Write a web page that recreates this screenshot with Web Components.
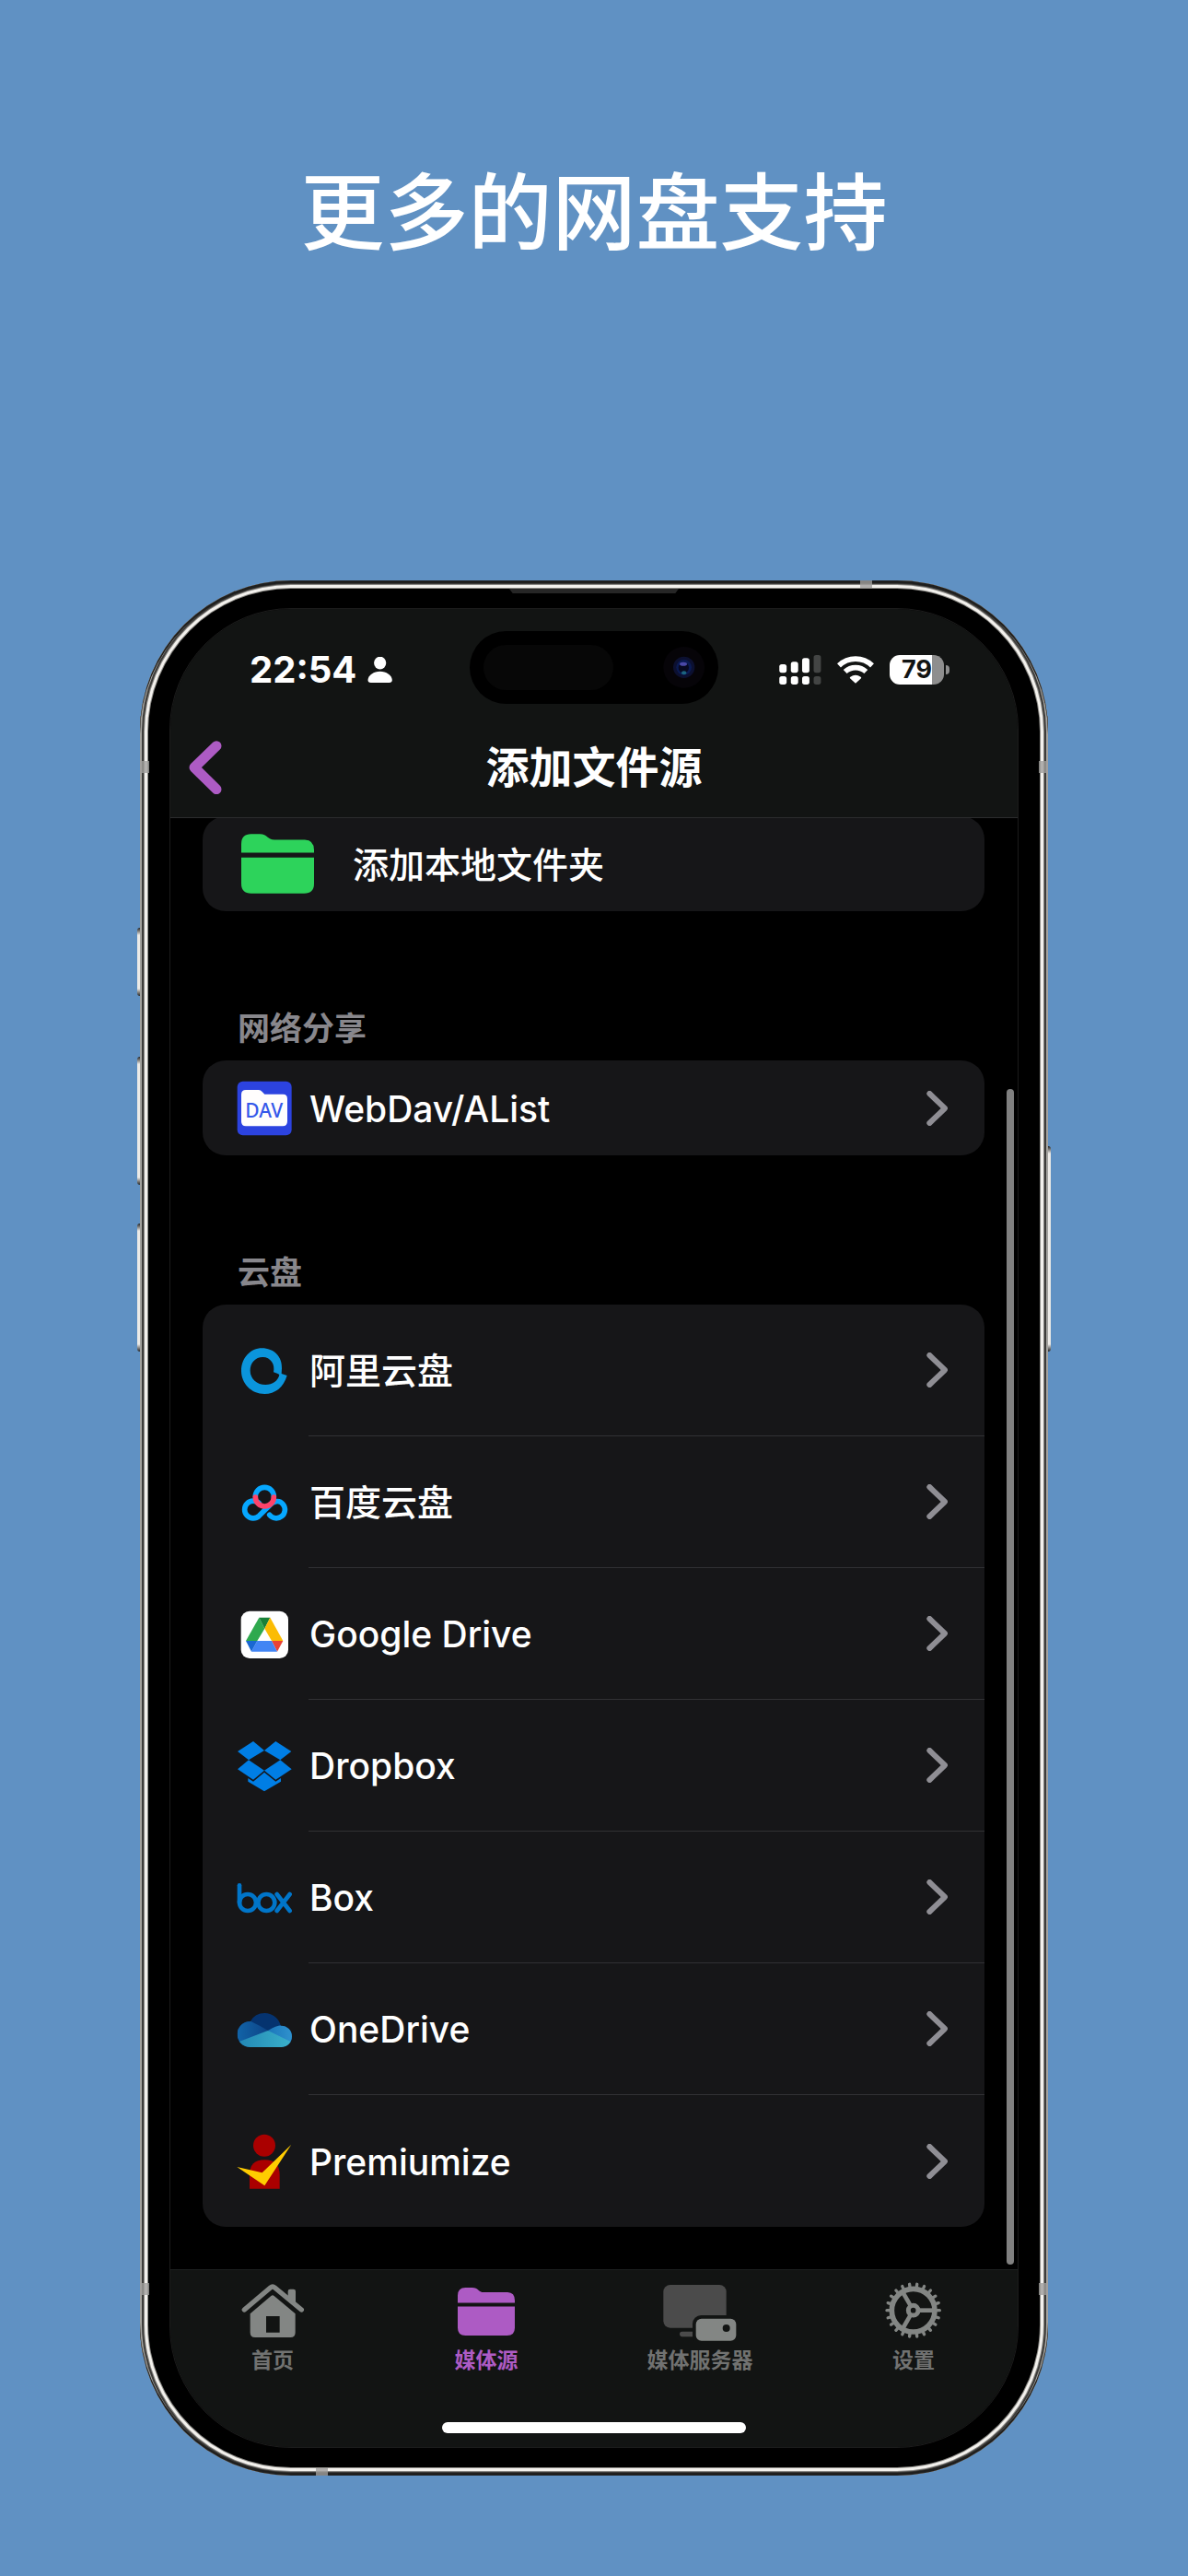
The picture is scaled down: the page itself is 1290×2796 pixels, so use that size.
<!DOCTYPE html>
<html lang="zh-CN">
<head>
<meta charset="utf-8">
<meta name="viewport" content="width=device-width, initial-scale=1">
<title>更多的网盘支持</title>
<style>
  body {
    margin: 0;
    min-height: 100vh;
    background: #6091c3;
    color: #fff;
    font-family: Inter, "Noto Sans CJK SC", sans-serif;
  }
  svg { display: block; }
</style>
</head>
<body>
<promo-page>
  <span slot="headline">更多的网盘支持</span>
  <phone-frame>
    <status-bar time="22:54" battery="79"></status-bar>
    <nav-bar>添加文件源</nav-bar>
    <source-list>
      <list-card>
        <list-row size="compact" plain>
          <svg slot="icon" width="79" height="65" viewBox="0 0 236 193" fill="#2dd35b" aria-hidden="true">
            <path d="M0 61V32Q0 0 32 0H60C86 0 84 19 108 19H206Q236 20 236 52V61Z"/>
            <path d="M0 76H236V161Q236 193 204 193H32Q0 193 0 161Z"/>
          </svg>
          添加本地文件夹
        </list-row>
      </list-card>

      <list-card heading="网络分享">
        <list-row size="compact">
          <svg slot="icon" width="60" height="60" viewBox="351 517 180 180" aria-hidden="true">
            <rect x="353" y="519" width="177" height="176" rx="18" fill="#2c43e0"/>
            <path d="M366 562Q366 547 381 547H423Q429 547 434 553L442 561H502Q516 561 516 576V649Q516 665 501 665H381Q366 665 366 650Z" fill="#fffdfd"/>
            <text x="440" y="638" text-anchor="middle" font-family="Noto Sans, sans-serif" font-size="63" fill="#3558ea">DAV</text>
          </svg>
          WebDav/AList
        </list-row>
      </list-card>

      <list-card heading="云盘">
        <list-row>
          <svg slot="icon" width="60" height="60" viewBox="51 168 180 180" aria-hidden="true">
            <path fill="#0b95dc" fill-rule="evenodd" d="M215 273C204 312 176 333 142 333C98 333 66 298 66 258C66 215 97 184 133 184C172 184 200 212 198 250L197 267ZM190 270C186 290 168 303 145 303C117 303 95 283 95 257C95 232 112 213 136 213C161 213 177 236 171 262L183 266Z"/>
          </svg>
          阿里云盘
        </list-row>
        <list-row>
          <svg slot="icon" width="60" height="60" viewBox="51 598 180 180" fill="none" stroke-width="17" stroke-linecap="round" aria-hidden="true">
            <path stroke="#06a7ff" d="M124 690A28 28 0 1 0 124 731L158 697C170 682 190 678 202 693A28 28 0 0 1 158 728"/>
            <path stroke="#06a7ff" d="M112 668A30 30 0 0 1 172 668"/>
            <path stroke="#ff436a" d="M112 670A30 30 0 0 0 172 670"/>
          </svg>
          百度云盘
        </list-row>
        <list-row>
          <svg slot="icon" width="60" height="60" viewBox="51 1027 180 180" aria-hidden="true">
            <rect x="65" y="1041" width="154" height="154" rx="28" fill="#fff"/>
            <path fill="#2fa94e" d="M124 1062L142 1098L118 1138H81Z"/>
            <path fill="#188038" d="M124 1062H160L142 1098Z"/>
            <path fill="#fbbc04" d="M160 1062L202 1138H165L142 1098Z"/>
            <path fill="#ea4335" d="M202 1138H165L183 1173Z"/>
            <path fill="#4285f4" d="M118 1138H165L183 1173H99Z"/>
            <path fill="#1967d2" d="M81 1138H118L99 1173Z"/>
          </svg>
          Google Drive
        </list-row>
        <list-row>
          <svg slot="icon" width="60" height="60" viewBox="51 138 180 180" fill="#007ee5" aria-hidden="true">
            <path d="M105 147L141 177L90 208L54 180Z"/>
            <path d="M178 147L229 180L193 208L141 177Z"/>
            <path d="M90 208L141 242L105 272L54 238Z"/>
            <path d="M193 208L230 238L178 272L141 242Z"/>
            <path d="M141 248L178 278L195 267V278L141 310L88 278V267L105 278Z"/>
          </svg>
          Dropbox
        </list-row>
        <list-row>
          <svg slot="icon" width="60" height="60" viewBox="51 567 180 180" fill="none" stroke="#0075c9" stroke-width="14" stroke-linecap="round" aria-hidden="true">
            <path d="M60 616V672"/>
            <circle cx="87" cy="672" r="27"/>
            <circle cx="148" cy="672" r="27"/>
            <path d="M182 645L224 699M224 645L182 699"/>
          </svg>
          Box
        </list-row>
        <list-row>
          <svg slot="icon" width="60" height="60" viewBox="51 126 180 180" aria-hidden="true">
            <defs>
              <clipPath id="cloud">
                <circle cx="95" cy="231" r="42"/>
                <circle cx="142" cy="216" r="54"/>
                <circle cx="196" cy="238" r="35"/>
                <path d="M95 225H196V273H95Z"/>
              </clipPath>
              <linearGradient id="cloudLeft" x1="0" x2="1"><stop offset="0" stop-color="#1264a8"/><stop offset="1" stop-color="#0d4487"/></linearGradient>
              <linearGradient id="cloudRight" x1="0" x2="1"><stop offset="0" stop-color="#1b76bb"/><stop offset="1" stop-color="#3295cf"/></linearGradient>
              <linearGradient id="cloudBase" x1="0" x2="1"><stop offset="0" stop-color="#2286b4"/><stop offset="1" stop-color="#3bb3cb"/></linearGradient>
            </defs>
            <g clip-path="url(#cloud)">
              <path d="M51 126H231V273H51Z" fill="#05336f"/>
              <path d="M51 180L97 189Q125 202 153 219L60 273H51Z" fill="url(#cloudLeft)"/>
              <path d="M153 219Q180 203 196 202L240 195V273H210Z" fill="url(#cloudRight)"/>
              <path d="M51 258L153 219L240 262V273H51Z" fill="url(#cloudBase)"/>
            </g>
          </svg>
          OneDrive
        </list-row>
        <list-row>
          <svg slot="icon" width="60" height="60" viewBox="51 556 180 180" aria-hidden="true">
            <circle cx="141" cy="594" r="36" fill="#aa0000"/>
            <path d="M93 735V690Q93 641 142 641T191 690V735Z" fill="#aa0000"/>
            <path d="M52 664L134 683L229 591L142 725Z" fill="#ffcc00"/>
          </svg>
          Premiumize
        </list-row>
      </list-card>
    </source-list>
    <tab-bar>
      <tab-item>
        <svg slot="icon" width="80" height="64" viewBox="351 231 240 192" fill="#838684" aria-hidden="true">
          <path d="M379 321L464 249Q471 243 478 249L565 321" fill="none" stroke="#838684" stroke-width="16" stroke-linecap="round"/>
          <path d="M521 282V261Q521 254 528 254H539Q546 254 546 261V303Z"/>
          <path fill-rule="evenodd" d="M466 276Q471 271 476 276L545 334V395Q545 411 529 411H414Q398 411 398 395V334ZM450 342V395H494V342Z"/>
        </svg>
        首页
      </tab-item>
      <tab-item current>
        <svg slot="icon" width="62" height="52" viewBox="0 0 236 193" preserveAspectRatio="none" fill="#ad5bc4" aria-hidden="true">
          <path d="M0 61V32Q0 0 32 0H60C86 0 84 19 108 19H206Q236 20 236 52V61Z"/>
          <path d="M0 76H236V161Q236 193 204 193H32Q0 193 0 161Z"/>
        </svg>
        媒体源
      </tab-item>
      <tab-item>
        <svg slot="icon" width="80" height="64" viewBox="243 231 240 192" aria-hidden="true">
          <rect x="244" y="240" width="205" height="140" rx="22" fill="#4b4b4b"/>
          <path d="M345 392H305Q297 392 297 400T305 409H345Z" fill="#4b4b4b"/>
          <rect x="339" y="339" width="152" height="95" rx="28" fill="#121413"/>
          <rect x="350" y="350" width="131" height="72" rx="18" fill="#838684"/>
          <circle cx="449" cy="381" r="12" fill="#121413"/>
        </svg>
        媒体服务器
      </tab-item>
      <tab-item>
        <gear-icon slot="icon"></gear-icon>
        设置
      </tab-item>
    </tab-bar>
  </phone-frame>
</promo-page>

<script>
  const define = (name, html, setup) => {
    const template = document.createElement('template');
    template.innerHTML = html;
    customElements.define(name, class extends HTMLElement {
      constructor() {
        super();
        this.attachShadow({ mode: 'open' }).append(template.content.cloneNode(true));
      }
      connectedCallback() {
        if (setup) setup(this, this.shadowRoot);
      }
    });
  };

  define('promo-page', `
    <style>
      :host { display: flex; flex-direction: column; gap: 330px; padding: 163px 152px 109px; }
      h1 { margin: 0; font-size: 91px; line-height: 137px; font-weight: 500; text-align: center; white-space: nowrap; }
    </style>
    <h1><slot name="headline"></slot></h1>
    <slot></slot>`);

  define('phone-frame', `
    <style>
      :host {
        display: block; position: relative; padding: 31px 33px; border-radius: 164px; background: #000;
        box-shadow: inset 0 3px 0 #1f1f1e, inset 0 -3px 0 #1f1f1e, inset 0 0 0 2px #a3a29e, inset 0 0 0 4px #3d3c3a, inset 0 0 0 5px #8a8986, inset 0 0 0 8px #f3f1ed, inset 0 0 0 9px #8b8a86;
      }
      .screen { overflow: hidden; border-radius: 131px; outline: 1px solid #1c1c1c; background: #000; }
      .key { position: absolute; width: 3px; background: linear-gradient(#222, #eceae6 8px calc(100% - 8px), #222); }
      .left { left: -3px; border-radius: 3px 0 0 3px; }
      .right { right: -3px; border-radius: 0 3px 3px 0; }
      .action { top: 377px; height: 74px; }
      .up { top: 517px; height: 139px; }
      .down { top: 698px; height: 139px; }
      .power { top: 614px; height: 223px; }
      .band { position: absolute; background: #a09f9c; opacity: .8; }
      .side { width: 10px; height: 13px; }
      .edge { width: 13px; height: 8px; }
      .start { left: 0; }
      .end { right: 0; }
      .high { top: 196px; }
      .low { bottom: 196px; }
      .top { top: 0; right: 191px; }
      .bottom { bottom: 0; left: 191px; }
      .speaker {
        position: absolute; top: 9px; left: 0; right: 0; width: 184px; height: 5px; margin: 0 auto;
        background: #262626; clip-path: polygon(0 0, 100% 0, 98% 100%, 2% 100%);
      }
    </style>
    <div class="key left action"></div>
    <div class="key left up"></div>
    <div class="key left down"></div>
    <div class="key right power"></div>
    <div class="band side start high"></div>
    <div class="band side end high"></div>
    <div class="band side start low"></div>
    <div class="band side end low"></div>
    <div class="band edge top"></div>
    <div class="band edge bottom"></div>
    <div class="speaker"></div>
    <div class="screen"><slot></slot></div>`);

  define('status-bar', `
    <style>
      :host {
        display: grid; grid-template-columns: 1fr 270px 1fr; align-items: center; height: 132px;
        background: #121413;
      }
      .left { display: flex; align-items: center; gap: 12px; padding-left: 86px; }
      .time { font-size: 40px; line-height: 46px; font-weight: 700; }
      .island {
        display: flex; align-items: center; justify-content: space-between; box-sizing: border-box;
        height: 79px; margin-bottom: 5px; padding: 0 15px; border-radius: 40px; background: #000;
      }
      .sensor { width: 141px; height: 49px; border-radius: 25px; background: #070707; }
      .right { display: flex; align-items: center; justify-content: flex-end; gap: 17px; padding-right: 74px; }
      .battery { display: flex; align-items: center; gap: 2px; }
      .cell {
        width: 59px; height: 32px; border-radius: 11px; text-align: center;
        background: linear-gradient(90deg, #fff 46px, #8e8e8e 46px);
        color: #121413; font-size: 27px; line-height: 32px; font-weight: 700;
      }
      .tip { width: 4px; height: 10px; border-radius: 0 5px 5px 0; background: #8e8e8e; }
      svg { display: block; }
    </style>
    <div class="left">
      <span class="time"></span>
      <svg width="27" height="28" viewBox="780 310 81 85" fill="#fff" aria-hidden="true">
        <ellipse cx="821" cy="330" rx="20" ry="21"/>
        <path d="M781 386C783 370 800 358 821 358S859 370 861 386Q861 395 851 395H791Q781 395 781 386Z"/>
      </svg>
    </div>
    <div class="island">
      <div class="sensor"></div>
      <svg width="45" height="45" viewBox="242 282 135 135" aria-hidden="true">
        <circle cx="310" cy="349" r="67" fill="#060408"/>
        <circle cx="310" cy="349" r="35" fill="#0c1030"/>
        <circle cx="310" cy="349" r="25" fill="#0a1a52"/>
        <circle cx="309" cy="350" r="17" fill="#070920"/>
        <ellipse cx="308" cy="338" rx="12" ry="6" fill="#4a48a8"/>
        <ellipse cx="310" cy="367" rx="8" ry="6" fill="#1b6480"/>
      </svg>
    </div>
    <div class="right">
      <svg width="46" height="32" viewBox="618 303 138 97" fill="#fff" aria-hidden="true">
        <rect x="618" y="333" width="24" height="28" rx="8"/>
        <rect x="656" y="325" width="24" height="36" rx="8"/>
        <rect x="693" y="313" width="24" height="48" rx="8"/>
        <rect x="731" y="303" width="24" height="58" rx="8" fill="#434544"/>
        <rect x="618" y="373" width="24" height="27" rx="8"/>
        <rect x="656" y="373" width="24" height="27" rx="8"/>
        <rect x="693" y="373" width="24" height="27" rx="8"/>
        <rect x="731" y="373" width="24" height="27" rx="8" fill="#434544"/>
      </svg>
      <svg width="40" height="30" viewBox="806 306 120 90" fill="none" stroke="#fff" stroke-width="17" aria-hidden="true">
        <path d="M812 337A78 78 0 0 1 920 337"/>
        <path d="M832 357A50 50 0 0 1 900 357"/>
        <path d="M866 395L848 379Q846 376 849 374Q866 362 883 374Q886 376 884 379Z" fill="#fff" stroke="none"/>
      </svg>
      <div class="battery"><div class="cell"></div><div class="tip"></div></div>
    </div>`, (el, root) => {
      root.querySelector('.time').textContent = el.getAttribute('time');
      root.querySelector('.cell').textContent = el.getAttribute('battery');
    });

  define('nav-bar', `
    <style>
      :host {
        display: grid; grid-template-columns: 80px 1fr 80px; align-items: center; height: 95px;
        box-sizing: border-box; padding-bottom: 14px; border-bottom: 1px solid #2c2d2e; background: #121413;
      }
      button { justify-self: start; margin: 0; padding: 0 0 0 20px; border: 0; background: none; }
      svg { display: block; }
      h2 { margin: 0; font-size: 47px; line-height: 70px; font-weight: 700; text-align: center; }
    </style>
    <button type="button" aria-label="返回">
      <svg width="36" height="58" viewBox="194 582 108 174" fill="none" stroke="#ad5bc4" stroke-width="33" stroke-linecap="round" stroke-linejoin="round" aria-hidden="true">
        <path d="M284 599L212 669L284 740"/>
      </svg>
    </button>
    <h2><slot></slot></h2>`);

  define('source-list', `
    <style>
      :host { display: block; position: relative; overflow: hidden; padding: 0 36px 46px 35px; }
      .content { margin-top: -2px; }
      .thumb { position: absolute; top: 294px; right: 4px; bottom: 5px; width: 8px; border-radius: 4px; background: #808080; }
    </style>
    <div class="content"><slot></slot></div>
    <div class="thumb"></div>`);

  define('list-card', `
    <style>
      :host { display: block; }
      h3 {
        margin: 0; padding: 105px 38px 13px; color: #88878c;
        font-size: 35px; line-height: 44px; font-weight: 700;
      }
      .card { overflow: hidden; border-radius: 25px; background: #161618; }
    </style>
    <h3></h3>
    <div class="card"><slot></slot></div>`, (el, root) => {
      const heading = root.querySelector('h3');
      if (el.hasAttribute('heading')) heading.textContent = el.getAttribute('heading');
      else heading.remove();
    });

  define('list-row', `
    <style>
      :host { display: block; height: 143px; }
      :host([size=compact]) { height: 103px; }
      button {
        display: flex; align-items: center; gap: 18px; width: 100%; height: 100%; box-sizing: border-box;
        margin: 0; padding: 0 0 0 37px; border: 0; background: none; color: inherit; text-align: left;
        font: inherit; font-size: 39px; line-height: 56px; font-weight: 500;
      }
      .body {
        display: flex; flex: 1; align-items: center; justify-content: space-between; box-sizing: border-box;
        height: 100%; padding-right: 40px; border-bottom: 1px solid #313134;
      }
      .label { padding: 2px 0 0 1px; }
      :host(:last-of-type) .body { border-bottom: 0; }
      :host([plain]) button { gap: 41px; padding-left: 42px; }
      :host([plain]) .chevron { display: none; }
    </style>
    <button type="button">
      <slot name="icon"></slot>
      <span class="body">
        <span class="label"><slot></slot></span>
        <svg class="chevron" width="23" height="38" viewBox="139 190 69 114" fill="none" stroke="#8f8e94" stroke-width="18" stroke-linecap="round" stroke-linejoin="round" aria-hidden="true">
          <path d="M149 199L199 247L149 295"/>
        </svg>
      </span>
    </button>`);

  define('tab-bar', `
    <style>
      :host {
        display: flex; flex-direction: column; align-items: center; justify-content: space-between;
        box-sizing: border-box; height: 193px; padding: 13px 0 15px; border-top: 1px solid #1d1f1f; background: #121413;
      }
      nav { display: flex; justify-content: space-between; align-self: stretch; padding: 0 21px 0 19px; }
      .home { width: 330px; height: 12px; border-radius: 6px; background: #fff; }
    </style>
    <nav><slot></slot></nav>
    <div class="home"></div>`);

  define('tab-item', `
    <style>
      :host { display: block; flex: 0 0 184px; }
      a {
        display: flex; flex-direction: column; align-items: center; gap: 7px; color: #717271; text-decoration: none;
        font-size: 23px; line-height: 28px; font-weight: 700;
      }
      :host([current]) a { color: #ad5bc4; }
      .icon { display: flex; align-items: center; height: 64px; }
    </style>
    <a href="#"><span class="icon"><slot name="icon"></slot></span><span><slot></slot></span></a>`);

  define('gear-icon', `
    <style>:host, svg { display: block; }</style>
    <svg width="80" height="64" viewBox="936 231 240 192" fill="none" stroke="#838684" aria-hidden="true">
      <circle cx="1055" cy="323" r="70" stroke-width="17"/>
      <circle cx="1055" cy="323" r="16" stroke-width="15"/>
      <g class="spokes" stroke-width="14"></g>
      <g class="teeth" stroke-width="10" stroke-linecap="round"></g>
    </svg>`, (el, root) => {
      const rays = (count, from, to) => Array.from({ length: count }, (_, i) => {
        const a = i * 2 * Math.PI / count;
        const at = r => (1055 + r * Math.cos(a)) + ' ' + (323 + r * Math.sin(a));
        return '<path d="M' + at(from) + 'L' + at(to) + '"/>';
      }).join('');
      root.querySelector('.spokes').innerHTML = rays(3, 20, 66);
      root.querySelector('.teeth').innerHTML = rays(22, 76, 86);
    });
</script>
</body>
</html>
